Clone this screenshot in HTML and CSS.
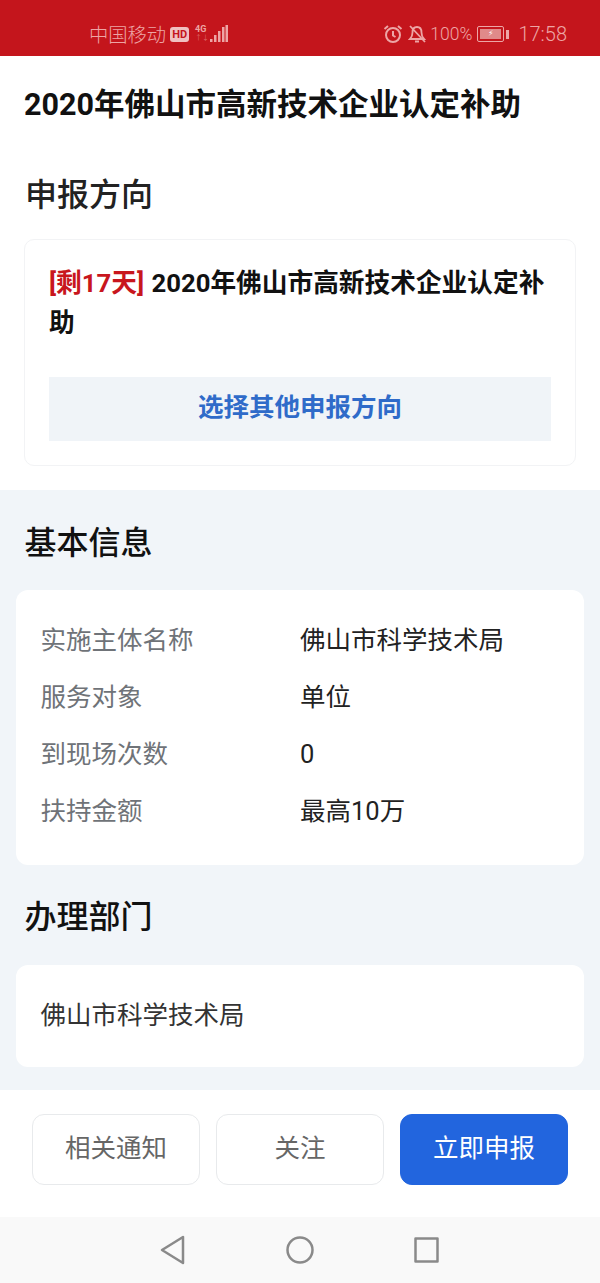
FILE: index.html
```html
<!DOCTYPE html>
<html lang="zh-CN">
<head>
    <meta charset="UTF-8">
    <meta name="viewport" content="width=device-width, initial-scale=1.0">
    <title>2020年佛山市高新技术企业认定补助</title>
    <link rel="stylesheet" href="styles.css">
</head>
<body>
    <div class="status-bar">
        <div class="status-left">
            <span class="carrier">中国移动</span>
            <span class="hd">HD</span>
            <span class="net"><span class="net-top">4G</span><span class="net-bottom">↑↓</span></span>
            <svg class="signal" width="18" height="20" viewBox="0 0 18 20" fill="currentColor">
                <rect x="0" y="15" width="2.500" height="3"/>
                <rect x="4" y="11" width="2.500" height="7"/>
                <rect x="8" y="7" width="2.500" height="11"/>
                <rect x="12" y="3" width="2.500" height="15"/>
                <rect x="15.500" y="1" width="2.500" height="17"/>
            </svg>
        </div>
        <div class="status-right">
            <svg width="20" height="20" viewBox="0 0 20 20" fill="none" stroke="currentColor" stroke-width="2">
                <circle cx="10" cy="11" r="7"/>
                <path d="M10 7v4.500l2.500 1.500M1.500 5l3.500-3M18.500 5l-3.500-3"/>
            </svg>
            <svg width="19" height="20" viewBox="0 0 19 20" fill="none" stroke="currentColor" stroke-width="1.800">
                <path d="M2 15h14c-2-2-2.500-3-2.500-6.500C13.500 5 12 3 9 3S4.500 5 4.500 8.500C4.500 12 4 13 2 15zM7 17.500h4M2 2l15 16"/>
            </svg>
            <span class="battery-pct">100%</span>
            <span class="battery">
                <span class="battery-body"><span class="battery-fill">⚡</span></span>
                <span class="battery-tip"></span>
            </span>
            <span class="clock">17:58</span>
        </div>
    </div>

    <div class="top-section">
        <h1 class="page-title">2020年佛山市高新技术企业认定补助</h1>
        <h2 class="direction-title">申报方向</h2>
        <div class="direction-card">
            <p class="direction-name"><span class="days-left">[剩17天]</span> 2020年佛山市高新技术企业认定补助</p>
            <div class="direction-btn">选择其他申报方向</div>
        </div>
    </div>

    <div class="grey-section">
        <h2 class="section-title">基本信息</h2>
        <div class="info-card">
            <div class="info-row"><span class="info-label">实施主体名称</span><span>佛山市科学技术局</span></div>
            <div class="info-row"><span class="info-label">服务对象</span><span>单位</span></div>
            <div class="info-row"><span class="info-label">到现场次数</span><span>0</span></div>
            <div class="info-row"><span class="info-label">扶持金额</span><span>最高10万</span></div>
        </div>
        <h2 class="section-title dept-title">办理部门</h2>
        <div class="dept-card">佛山市科学技术局</div>
    </div>

    <div class="action-bar">
        <div class="action-btn">相关通知</div>
        <div class="action-btn">关注</div>
        <div class="action-btn primary">立即申报</div>
    </div>

    <div class="nav-bar">
        <svg width="28" height="30" viewBox="0 0 28 30" fill="none" stroke="#8a8a8a" stroke-width="2.500" stroke-linejoin="round">
            <path d="M24 2v26L3 15z"/>
        </svg>
        <svg width="30" height="30" viewBox="0 0 30 30" fill="none" stroke="#8a8a8a" stroke-width="2.500">
            <circle cx="15" cy="15" r="12.500"/>
        </svg>
        <svg width="28" height="28" viewBox="0 0 28 28" fill="none" stroke="#8a8a8a" stroke-width="2.500" stroke-linejoin="round">
            <rect x="2.500" y="2.500" width="22" height="23"/>
        </svg>
    </div>
</body>
</html>
```

FILE: styles.css
```css
* {
    margin: 0;
    padding: 0;
    box-sizing: border-box;
    font-family: "Roboto", "Noto Sans CJK SC", sans-serif;
}

body {
    width: 600px;
    height: 1283px;
    overflow: hidden;
    background-color: #fff;
    color: #1c1c1c;
}

.status-bar {
    height: 56px;
    background-color: #c4151c;
    color: #eda5a5;
    display: flex;
    justify-content: space-between;
    align-items: center;
    padding: 12px 33px 0 89px;
}

.status-left,
.status-right {
    display: flex;
    align-items: center;
}

.carrier {
    font-size: 19.300px;
    font-weight: 300;
}

.hd {
    margin-left: 4px;
    background-color: #f0c0c0;
    color: #c4151c;
    font-size: 11px;
    font-weight: 700;
    line-height: 15px;
    padding: 0 2px;
    border-radius: 3px;
}

.net {
    display: flex;
    flex-direction: column;
    margin-left: 6px;
    line-height: 9px;
}

.net-top {
    font-size: 9px;
    font-weight: 700;
}

.net-bottom {
    font-size: 7px;
    color: #dc6a6a;
}

.signal {
    margin-left: 1px;
}

.status-right {
    gap: 5px;
}

.battery-pct {
    margin-left: -2px;
    font-size: 17.500px;
    font-weight: 300;
}

.battery {
    display: flex;
    align-items: center;
}

.battery-body {
    width: 27px;
    height: 16px;
    border: 1px solid #eda5a5;
    border-radius: 2px;
    padding: 2px;
    display: flex;
}

.battery-fill {
    flex: 1;
    background-color: #e08a8a;
    color: #fff;
    font-size: 8px;
    line-height: 10px;
    text-align: center;
    font-family: "DejaVu Sans", sans-serif;
}

.battery-tip {
    width: 3px;
    height: 9px;
    margin-left: 2px;
    background-color: #eda5a5;
}

.clock {
    margin-left: 4px;
    font-size: 20px;
    font-weight: 300;
}

.top-section {
    height: 434px;
    padding: 29px 24px 0;
}

.page-title {
    font-size: 30.500px;
    line-height: 40px;
    font-weight: 700;
    color: #111;
}

.direction-title {
    margin: 49px 0 0 1px;
    font-size: 32px;
    line-height: 42px;
    font-weight: 500;
    color: #222;
}

.direction-card {
    margin-top: 23px;
    height: 227px;
    padding: 23px 24px 0;
    border: 1px solid #f2f3f5;
    border-radius: 10px;
}

.direction-name {
    font-size: 25.700px;
    word-spacing: 1px;
    line-height: 40px;
    font-weight: 700;
    color: #111;
}

.days-left {
    color: #c8161d;
}

.direction-btn {
    margin-top: 34px;
    height: 64px;
    background-color: #f0f4f8;
    color: #2f6bc9;
    font-size: 25.500px;
    font-weight: 700;
    line-height: 60px;
    text-align: center;
}

.grey-section {
    height: 600px;
    background-color: #f1f5f9;
    padding: 32px 16px 0;
}

.section-title {
    margin-left: 8.500px;
    font-size: 32px;
    line-height: 42px;
    font-weight: 500;
    color: #111;
}

.info-card {
    margin-top: 26px;
    height: 275px;
    padding: 22px 24.500px 0;
    background-color: #fff;
    border-radius: 12px;
}

.info-row {
    display: flex;
    font-size: 25.500px;
    line-height: 57px;
    color: #222;
}

.info-label {
    width: 259.500px;
    color: #6f7378;
}

.dept-title {
    margin-top: 31px;
}

.dept-card {
    margin-top: 27px;
    height: 102px;
    padding-left: 24.500px;
    background-color: #fff;
    border-radius: 12px;
    font-size: 25.500px;
    line-height: 100px;
    color: #333;
}

.action-bar {
    height: 127px;
    display: flex;
    gap: 16px;
    padding: 24px 32px 0;
    background-color: #fff;
}

.action-btn {
    flex: 1;
    height: 71px;
    border: 1px solid #e8eaec;
    border-radius: 12px;
    font-size: 25.500px;
    line-height: 66px;
    text-align: center;
    color: #666;
}

.action-btn.primary {
    background-color: #2265de;
    border-color: #2265de;
    color: #fff;
}

.nav-bar {
    height: 66px;
    background-color: #f9f9f9;
    display: grid;
    grid-template-columns: 28px 30px 28px;
    justify-content: center;
    column-gap: 98px;
    align-items: center;
}
```
